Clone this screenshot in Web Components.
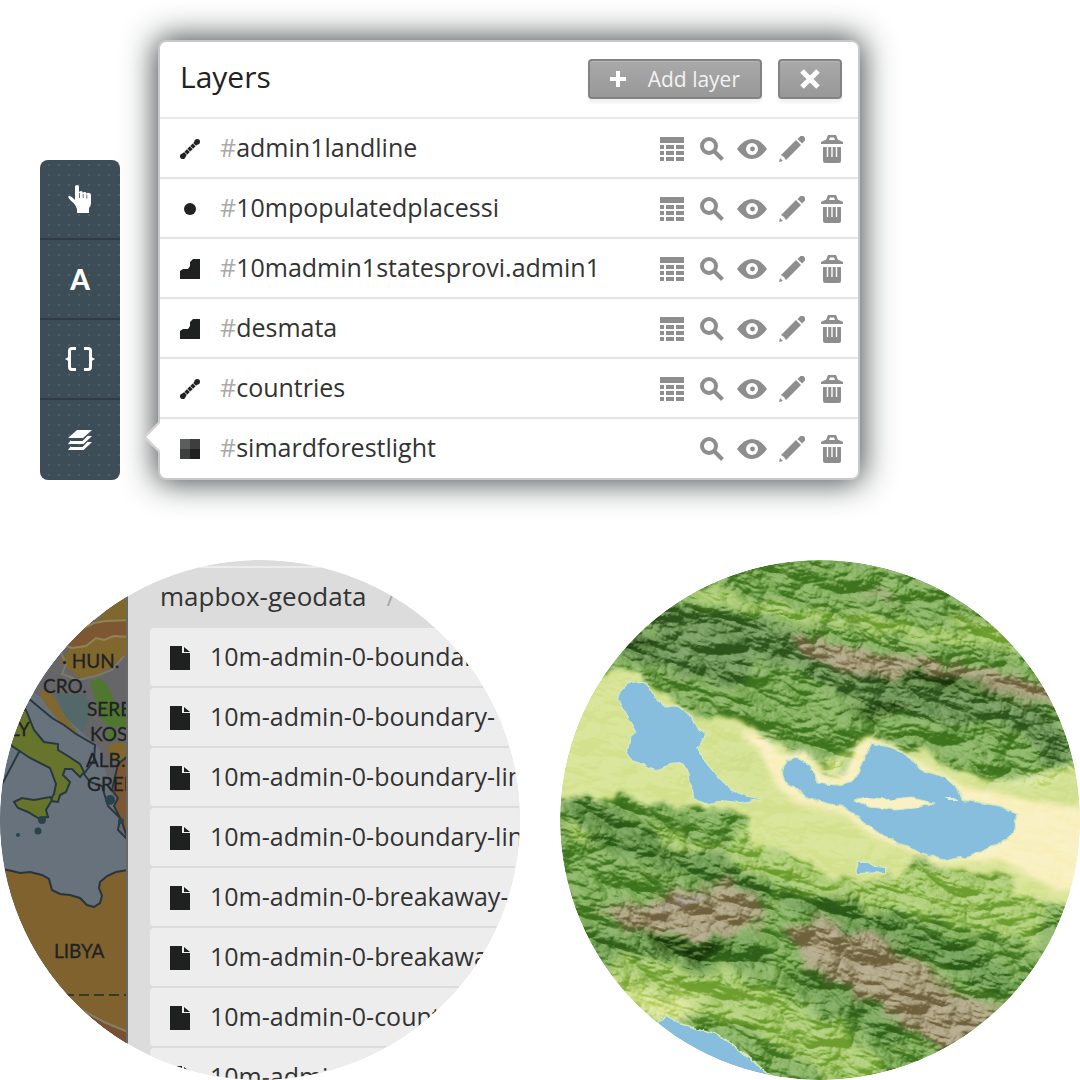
<!DOCTYPE html>
<html lang="en">
<head>
<meta charset="utf-8">
<title>Layers</title>
<style>
  html, body { margin: 0; background: #fff; }
  body { font-family: "Open Sans", "Noto Sans", sans-serif; color: #333; }
</style>
</head>
<body>
<map-workspace>
  <tool-bar slot="tools">
    <tool-button label="Pan" icon="hand"></tool-button>
    <tool-button label="Fonts">A</tool-button>
    <tool-button label="Carto" icon="braces"></tool-button>
    <tool-button label="Layers" icon="layers"></tool-button>
  </tool-bar>
  <layer-panel slot="panel" heading="Layers">
    <layer-row type="line" table>admin1landline</layer-row>
    <layer-row type="point" table>10mpopulatedplacessi</layer-row>
    <layer-row type="polygon" table>10madmin1statesprovi.admin1</layer-row>
    <layer-row type="polygon" table>desmata</layer-row>
    <layer-row type="line" table>countries</layer-row>
    <layer-row type="raster">simardforestlight</layer-row>
  </layer-panel>
  <round-frame>
    <europe-map></europe-map>
    <file-browser folder="mapbox-geodata">
      <file-item>10m-admin-0-boundary</file-item>
      <file-item>10m-admin-0-boundary-</file-item>
      <file-item>10m-admin-0-boundary-lin</file-item>
      <file-item>10m-admin-0-boundary-lin</file-item>
      <file-item>10m-admin-0-breakaway-</file-item>
      <file-item>10m-admin-0-breakaway</file-item>
      <file-item>10m-admin-0-countries</file-item>
      <file-item>10m-admin-0-countries</file-item>
    </file-browser>
  </round-frame>
  <round-frame><terrain-map></terrain-map></round-frame>
</map-workspace>

<script>
const svg = (w, h, body) => `<svg width="${w}" height="${h}" viewBox="0 0 ${w} ${h}" aria-hidden="true">${body}</svg>`;

const ICONS = {
  hand: svg(24, 28, '<path fill="#fff" d="M7 1.500Q7 0 9 0Q11 0 11 1.500V7.500Q11 6 13 6Q14.500 6 15 8Q15.500 6.500 17 7Q18.300 7 18.700 8.500Q19.500 7.500 21 8Q23 8 23 10V18Q23 21 21 23V28H9V24Q8 20 5 17.500Q3 16 1.500 14Q-.5 12 .8 11Q2.500 10.500 5 13L7 15Z"/><path stroke="#3d4d58" stroke-width=".8" d="M11.500 8v5M15.200 9v4M18.800 9.500v4"/>'),
  braces: svg(30, 24, '<g fill="none" stroke="#fff" stroke-width="3"><path d="M11 1.500H7Q4.500 1.500 4.500 4V20Q4.500 22.500 7 22.500H11M19 1.500H23Q25.500 1.500 25.500 4V20Q25.500 22.500 23 22.500H19"/></g><path fill="#fff" d="M0 12L5 9V15ZM30 12L25 9V15Z"/>'),
  layers: svg(24, 21, '<g fill="#fff"><path d="M9 0H24L15 8H0Z"/><path d="M3 10L0 14H15.500L24 6H19.500L14.500 11H3Z"/><path d="M3 16L0 20H15.500L24 12H19.500L14.500 17H3Z"/></g>'),
  plus: svg(16, 16, '<path d="M8 0V16M0 8H16" stroke="#fff" stroke-width="4"/>'),
  close: svg(20, 20, '<path d="M2 2L18 18M18 2L2 18" stroke="#fff" stroke-width="5"/>'),
  line: svg(20, 20, '<path d="M3 17L17 3" stroke="#222" stroke-width="4" stroke-dasharray="3.500 .6"/><circle cx="2.800" cy="17.200" r="2.800" fill="#222"/><circle cx="17.200" cy="2.800" r="2.800" fill="#222"/>'),
  point: svg(20, 20, '<circle cx="10" cy="10" r="6" fill="#222"/>'),
  polygon: svg(20, 20, '<path fill="#1e2120" d="M0 20V12L3 10H8L10 7V3L13 0H20V20Z"/>'),
  raster: svg(20, 20, '<path fill="#5c5e5d" d="M0 0H10V10H0Z"/><path fill="#3c3f3d" d="M10 0H20V10H10ZM0 10H10V20H0Z"/><path fill="#1e2120" d="M10 10H20V20H10Z"/>'),
  table: svg(24, 24, '<path fill="#8e8e8e" d="M0 0H24V6H0ZM0 8H4V12H0ZM6 8H14V12H6ZM16 8H24V12H16ZM0 14H4V18H0ZM6 14H14V18H6ZM16 14H24V18H16ZM0 20H4V24H0ZM6 20H14V24H6ZM16 20H24V24H16Z"/>'),
  zoom: svg(24, 24, '<circle cx="9" cy="9" r="7" fill="none" stroke="#8e8e8e" stroke-width="4"/><path d="M14 14L22.500 22.500" stroke="#8e8e8e" stroke-width="4"/>'),
  eye: svg(30, 20, '<path fill="#8e8e8e" d="M0 10Q7 0 15 0T30 10Q23 20 15 20T0 10Z"/><circle cx="15" cy="10" r="6" fill="#fff"/><circle cx="15.500" cy="10" r="2.400" fill="#8e8e8e"/>'),
  edit: svg(26, 26, '<path fill="#8e8e8e" d="M2 19L17 4L22 9L7 24L5 21ZM18.500 3L21.500 0H24.500L26 2V4.500L23 7.500ZM1 22L4 25L0 26Z"/>'),
  trash: svg(22, 28, '<path fill="#8e8e8e" fill-rule="evenodd" d="M0 9V7L4 5H5L7 0H15L17 5H18L22 7V9ZM8 5H14L13 2.500H9Z"/><path fill="#8e8e8e" d="M2 12H20V26Q20 28 18 28H4Q2 28 2 26Z"/><path stroke="#fff" stroke-width="1.400" d="M6.500 11V22M11 11V22M15.500 11V22"/>'),
  file: svg(20, 24, '<path fill="#1e2120" d="M0 0H12V7H20V24H0ZM14 1L20 6H14Z"/>')
};

function define(name, template) {
  customElements.define(name, class extends HTMLElement {
    constructor() {
      super();
      this.attachShadow({ mode: "open" });
    }
    connectedCallback() {
      this.shadowRoot.innerHTML = template(this);
    }
  });
}

define("map-workspace", () => `
  <style>
    :host { display: flex; flex-direction: column; gap: 80px; }
    header { display: flex; align-items: flex-end; gap: 38px; padding: 40px 40px 0; }
    ::slotted(tool-bar) { flex: none; }
    ::slotted(layer-panel) { flex: 0 1 702px; }
    main { display: grid; grid-template-columns: 1fr 1fr; gap: 40px; }
  </style>
  <header><slot name="tools"></slot><slot name="panel"></slot></header>
  <main><slot></slot></main>`);

define("tool-bar", () => `
  <style>
    :host { display: block; width: 80px; border-radius: 8px; overflow: hidden;
      background: radial-gradient(circle at 5px 5px, #4b5e6a 1px, transparent 1px) 4px 0 / 10px 10px, #3d4d58; }
    nav { display: flex; flex-direction: column; }
    ::slotted(tool-button:not(:last-child)) { border-bottom: 2px solid #303c42; }
  </style>
  <nav><slot></slot></nav>`);

define("tool-button", el => `
  <style>
    :host { display: block; height: 80px; box-sizing: border-box; }
    button { width: 100%; height: 100%; display: flex; align-items: center; justify-content: center;
      margin: 0; padding: 0; border: 0; background: none; color: #fff; font: 900 28px/40px Lato, sans-serif; cursor: pointer; }
  </style>
  <button type="button" aria-label="${el.getAttribute("label")}">${ICONS[el.getAttribute("icon")] || "<slot></slot>"}</button>`);

define("layer-panel", el => `
  <style>
    :host { display: block; position: relative; box-sizing: border-box; background: #fff;
      border: 2px solid #c8c9ca; border-radius: 8px; box-shadow: 0 0 32px 2px rgba(24, 32, 32, .85); }
    :host::before { content: ""; position: absolute; left: -12px; bottom: 30px; width: 20px; height: 20px;
      background: #fff; border: solid #d0d1d0; border-width: 0 0 2px 2px; transform: rotate(45deg); }
    header { display: flex; align-items: center; gap: 16px; height: 73px; padding: 0 16px 2px 20px; border-bottom: 2px solid #eaeaea; }
    h1 { flex: 1; margin: 0; padding-bottom: 4px; font-size: 30px; line-height: 40px; font-weight: 400; color: #222; }
    button { display: flex; align-items: center; justify-content: center; gap: 22px; height: 40px; padding: 0 20px;
      box-sizing: border-box; border: 2px solid #838383; border-radius: 4px; color: #f2f2f2;
      background: linear-gradient(#a9a9a9, #989898); box-shadow: 0 4px 3px #f2f2f2, inset 0 1px #b6b6b6;
      font: 21px/28px "Open Sans", sans-serif; cursor: pointer; }
  </style>
  <header>
    <h1>${el.getAttribute("heading")}</h1>
    <button type="button">${ICONS.plus}<span>Add layer</span></button>
    <button type="button" aria-label="Close">${ICONS.close}</button>
  </header>
  <div><slot></slot></div>`);

define("layer-row", el => `
  <style>
    :host { display: flex; align-items: center; height: 58px; padding: 0 6px 0 20px; border-bottom: 2px solid #e3e3e3; }
    :host(:last-of-type) { padding-bottom: 1px; border: 0; }
    .kind { display: flex; width: 20px; margin-right: 20px; padding-top: 2px; }
    .name { flex: 1; padding-bottom: 2px; font-size: 25px; line-height: 32px; white-space: nowrap; }
    .hash { color: #aaa; }
    button { display: flex; align-items: center; justify-content: center; width: 40px; height: 40px;
      margin: 0; padding: 2px 0 0; border: 0; background: none; cursor: pointer; }
  </style>
  <span class="kind">${ICONS[el.getAttribute("type")]}</span>
  <span class="name"><span class="hash">#</span><slot></slot></span>
  ${["table", "zoom", "eye", "edit", "trash"].filter(n => n !== "table" || el.hasAttribute("table"))
    .map(n => `<button type="button" aria-label="${n}">${ICONS[n]}</button>`).join("")}`);

define("round-frame", () => `
  <style>
    :host { display: flex; aspect-ratio: 1; min-width: 0; border-radius: 50%; overflow: hidden; clip-path: circle(50%); }
  </style>
  <slot></slot>`);

define("file-browser", el => `
  <style>
    :host { display: block; flex: 1; min-width: 0; height: 100%; overflow: hidden; background: #dcdcdc; border-left: 2px solid #68696a; box-sizing: border-box; }
    header { height: 56px; margin-top: 6px; border-top: 2px solid #ececec; padding: 0 0 4px 32px;
      display: flex; align-items: center; font-size: 26px; line-height: 32px; }
    .sep { margin-left: 20px; color: #aaa; }
    div { display: flex; flex-direction: column; gap: 2px; padding-left: 22px; }
  </style>
  <header>${el.getAttribute("folder")}<span class="sep">/</span></header>
  <div><slot></slot></div>`);

define("file-item", () => `
  <style>
    :host { display: block; }
    a { display: flex; align-items: center; gap: 20px; height: 58px; padding-left: 20px; border-radius: 4px 0 0 4px;
      background: #ededed; color: #333; text-decoration: none; font-size: 25px; line-height: 32px; white-space: nowrap; }
    svg { flex: none; padding-top: 2px; }
    span { padding-bottom: 2px; }
  </style>
  <a href="#">${ICONS.file}<span><slot></slot></span></a>`);

define("europe-map", () => `
  <style>
    :host { display: block; flex: none; width: 126px; height: 100%; overflow: hidden; background: #68727c; }
    svg { display: block; }
    text { font: 19px Lato, sans-serif; fill: #1f2224; stroke: #1f2224; stroke-width: .3; }
  </style>
  <svg width="126" height="520" viewBox="0 0 126 520" role="img" aria-label="Map of southern Europe">
    <path fill="#666568" d="M0 60H126V290L100 190L60 150L30 130Z"/>
    <path fill="#7f672d" d="M60 100L95 62L126 30V96L100 114L80 118L62 104Z"/>
    <path fill="#7d5632" stroke="#8f8358" stroke-width="2" d="M66 86L80 70L94 63L106 61L130 60V77L114 76L104 80L96 78L86 86L72 88Z"/>
    <path fill="none" stroke="#7d7a6a" stroke-width="2" d="M60 90L66 104L62 114L78 120L96 116L112 110L124 96"/>
    <path fill="#50772f" d="M90 122L100 118L108 126L116 144L126 152V168L108 166L100 158L96 142Z"/>
    <path fill="#536869" d="M56 134L85 134L90 146L88 160L82 172L66 158Z"/>
    <path fill="#7f672d" d="M38 132L48 130L56 140L62 152L80 176L66 168L48 148Z"/>
    <path fill="#50772f" d="M106 172L114 168L118 176L110 182Z"/>
    <path fill="#7f672d" d="M108 186L118 182L126 184V196L116 202L109 196Z"/>
    <g fill="#68727c" stroke="#29383f" stroke-width="2">
      <path d="M28 138L40 148L52 158L64 165L76 174L95 185L94 200L84 214L90 222L102 226L108 246L120 258L118 270L128 280V522H-2V232L20 190L30 170L22 158Z"/>
      <path fill="#7d5632" d="M118 204L128 196V280L122 262L114 246L118 238L112 230Z"/>
      <path fill="#67742c" d="M0 150H26L30 160L34 170L44 182L58 184V190L68 196L80 204L84 212L80 217L72 209L65 209L63 215L70 222L66 232L60 235L58 242L50 241L54 234L56 224L50 208L30 198L12 186L0 170Z"/>
      <path fill="#67742c" d="M14 242L22 238L34 240L50 237L52 240L46 250L48 257L38 258L28 252L18 248Z"/>
      <path fill="#7f622d" stroke="#29343b" d="M-2 308L12 311L20 313L30 312L42 315L49 319L52 330L60 334L70 335L80 338L87 345L94 347L100 343L102 336L99 328L100 322L107 316L116 312L128 310V522H-2Z"/>
    </g>
    <g fill="#29434d"><circle cx="18" cy="275" r="2"/><circle cx="38" cy="271" r="3.500"/><circle cx="42" cy="260" r="4"/><circle cx="110" cy="240" r="5"/><circle cx="121" cy="261" r="3"/></g>
    <path stroke="#343d1d" stroke-width="2" stroke-dasharray="10 5" d="M64 435H126"/>
    <path fill="#7a5032" stroke="#858064" stroke-width="2" d="M80 449L104 462L128 472V520H84Z"/>
    <text x="62" y="108">· HUN.</text>
    <text x="43" y="133">CRO.</text>
    <text x="87" y="156">SERB.</text>
    <text x="-18" y="176">ITALY</text>
    <text x="90" y="181">KOS.</text>
    <text x="86" y="207">ALB.</text>
    <text x="87" y="231">GREECE</text>
    <text x="54" y="398">LIBYA</text>
  </svg>`);

define("terrain-map", () => {
  const low = "M-10 242L-10 100L45 112L62 110L92 130L130 152L165 160L200 175L228 196L250 196L272 222L288 214L296 186L306 176L335 186L372 196L400 206L430 222L470 228L530 205L530 345L490 345L440 315L400 312L360 300L325 320L275 318L235 292L200 288L192 256L120 246L60 238Z";
  const lakes = `<path d="M59 140Q62 126 71 123L82 122Q90 126 94 138Q104 148 118 148L131 157L136 168L144 175L140 184L136 188L148 206L160 221L174 232L188 237L201 239L180 242L162 240L146 244L136 238L130 224L128 208L120 202L109 203L98 210L88 206L74 201L67 190L76 170L70 160Z"/>
    <path d="M223 212L226 201L236 198L250 206L258 224L282 226L296 218L304 200L312 184L330 188L345 194L360 210L385 218L398 230L402 241L420 243L440 247L456 254L454 272L440 283L410 295L386 300L360 292L325 276L305 262L296 255L282 246L260 241L245 236L238 228L225 222Z"/>
    <path d="M297 302H308L316 307L325 308V312L298 313Z"/>
    <path d="M94 470L106 456L118 464L140 470L160 476L175 488L190 500L210 516L205 530H70Z"/>`;
  return `
  <style>:host { display: block; flex: 1; } svg { display: block; width: 100%; height: 100%; }</style>
  <svg viewBox="0 0 520 520" role="img" aria-label="Terrain map with lakes">
    <defs>
      <filter id="b3" x="-30%" y="-30%" width="160%" height="160%"><feGaussianBlur stdDeviation="3"/></filter>
      <filter id="b7" x="-30%" y="-30%" width="160%" height="160%"><feGaussianBlur stdDeviation="7"/></filter>
      <filter id="rough" x="-10%" y="-10%" width="120%" height="120%"><feTurbulence type="fractalNoise" baseFrequency=".04" numOctaves="4" seed="8"/><feDisplacementMap in="SourceGraphic" scale="26" xChannelSelector="R" yChannelSelector="G"/><feGaussianBlur stdDeviation="2"/></filter>
      <filter id="shore" x="-10%" y="-10%" width="120%" height="120%"><feTurbulence type="fractalNoise" baseFrequency=".12" numOctaves="2" seed="3" result="n"/><feDisplacementMap in="SourceGraphic" in2="n" scale="5" xChannelSelector="R" yChannelSelector="G"/></filter>
      <filter id="relief" x="0" y="0" width="100%" height="100%" color-interpolation-filters="sRGB">
        <feTurbulence type="turbulence" baseFrequency=".014 .026" numOctaves="5" seed="23"/>
        <feColorMatrix values="0 0 0 0 0  0 0 0 0 0  0 0 0 0 0  1 0 0 0 0"/>
        <feDiffuseLighting surfaceScale="20" diffuseConstant=".74" lighting-color="#fff"><feDistantLight azimuth="225" elevation="45"/></feDiffuseLighting>
      </filter>
      <mask id="hills" maskUnits="userSpaceOnUse" x="0" y="0" width="520" height="520">
        <rect width="520" height="520" fill="#fff"/>
        <path d="${low}" fill="#333" filter="url(#rough)"/>
      </mask>
    </defs>
    <rect width="520" height="520" fill="#7fac59"/>
    <g filter="url(#rough)">
      <g fill="none" stroke-linecap="round" filter="url(#b3)">
        <path stroke="#a8c96d" stroke-width="14" d="M120 30L240 55L340 70L470 90M400 60L470 85M10 270L100 275L200 310L350 340L480 380"/>
        <path stroke="#6b9253" stroke-width="34" d="M110 60L220 85L330 135L460 155L500 190M80 85L180 110"/>
        <path stroke="#67964c" stroke-width="30" d="M20 250L110 300L200 320M240 335L330 370L440 420"/>
        <path stroke="#6e9c50" stroke-width="30" d="M250 420L330 470M40 385L140 388L200 395"/>
        <path stroke="#a7c96d" stroke-width="46" d="M70 420L180 440L260 480L300 510M190 290L310 325L470 345"/>
      </g>
      <path fill="#d9e599" d="${low}"/>
      <path fill="#d9e599" d="M20 410L90 430L140 440L130 460L90 470Z" filter="url(#b7)"/>
      <g fill="#a89d7c" filter="url(#b3)">
        <path d="M222 74L250 80L300 90L350 98L400 104L450 112L500 132V148L440 132L390 114L310 116L250 98Z"/>
        <path opacity=".6" d="M295 28L322 28L342 44L320 42Z"/>
        <path d="M36 352L80 342L140 325L180 325L204 342L200 370L140 380L84 372Z"/>
        <path d="M225 370L260 360L330 380L380 425L450 455L440 500L380 490L310 440L245 405Z"/>
      </g>
      <g fill="#34591f" opacity=".7" filter="url(#b3)">
        <path d="M60 88L90 70L84 82L64 94ZM300 118L385 112L460 136L400 128L350 124ZM80 376L140 386L170 380L140 402L90 390ZM280 150L330 142L360 145L320 154Z"/>
      </g>
    </g>
    <path fill="#f9f1c3" d="M178 168L205 176L222 195L246 190L262 214L284 214L296 184L310 176L355 200L404 226L460 238L530 250V330L495 330L440 300L380 304L310 275L285 254L235 244L216 224Z" filter="url(#b3)"/>
    <g fill="#d5e397" filter="url(#b3)"><path d="M264 200L292 190L280 216L266 218ZM400 218L450 220L530 200V240L470 238ZM150 165L200 190L212 230L190 232L160 205Z"/></g>
    <g mask="url(#hills)" style="mix-blend-mode:soft-light">
      <rect x="-120" y="-150" width="800" height="800" transform="rotate(17 260 260)" filter="url(#relief)"/>
    </g>
    <path fill="none" stroke="#b8b6cf" stroke-width="5" stroke-dasharray="4 3 8 4" opacity=".6" filter="url(#rough)" d="M92 350L120 342L148 332"/>
    <g filter="url(#shore)">
      <g fill="none" stroke="#d6e8bc" stroke-width="3">${lakes}</g>
      <g fill="#87bedd">${lakes}</g>
      <path fill="#f9f1c3" stroke="#d6e8bc" d="M294 240L306 237L332 240L352 238L374 243L355 248L335 250L310 247Z"/>
      <path fill="#dfeecb" d="M385 237H394L399 240L388 240Z"/>
    </g>
  </svg>`;
});
</script>
</body>
</html>
